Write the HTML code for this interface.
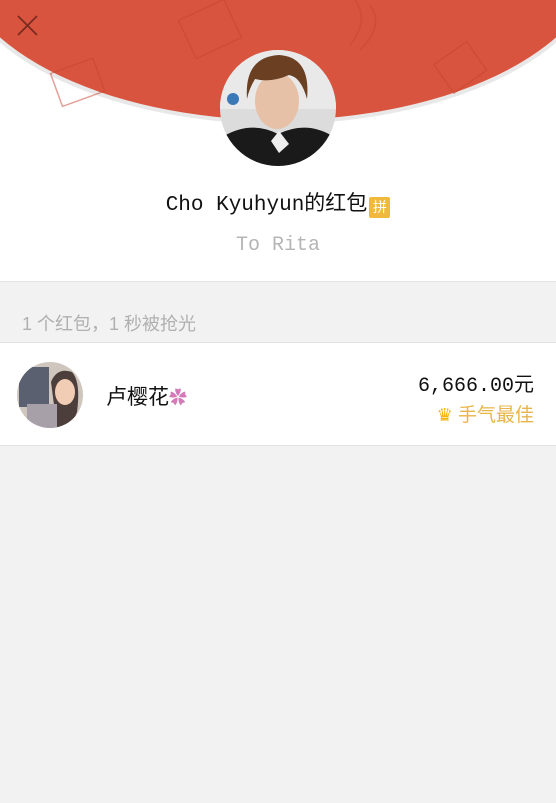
<!DOCTYPE html>
<html><head><meta charset="utf-8"><style>
body{margin:0;width:556px;height:803px;background:#f2f2f2;position:relative;overflow:hidden;font-family:"Liberation Sans","Noto Sans CJK SC",sans-serif}
.top{position:absolute;left:0;top:0;width:556px;height:281px;background:#fff;border-bottom:1px solid #e4e4e4}
.t{position:absolute;white-space:nowrap}
.m{font-family:"Liberation Mono","Noto Sans CJK SC",monospace}
</style></head><body>
<div class="top">
<svg width="556" height="140" style="position:absolute;left:0;top:0">
<ellipse cx="278" cy="-48" rx="326" ry="170" fill="#e8e8e8" transform="translate(0,2)"/>
<ellipse cx="278" cy="-50" rx="324" ry="170" fill="#d9543f"/>
<g stroke="#c4452f" stroke-width="1.5" fill="none" opacity=".5">
<rect x="185" y="8" width="50" height="42" transform="rotate(-25 210 29)"/>
<rect x="55" y="65" width="45" height="35" transform="rotate(-20 77 82)"/>
<rect x="440" y="50" width="40" height="35" transform="rotate(-35 460 67)"/>
<path d="M355 0 Q370 20 350 45 M370 5 Q385 25 360 50"/>
</g>
<path d="M18 16 L37 35 M37 16 L18 35" stroke="#7a2b20" stroke-width="1.8"/>
</svg>
<svg width="118" height="118" style="position:absolute;top:49px;left:219px">
<defs><clipPath id="c"><circle cx="59" cy="59" r="58"/></clipPath></defs>
<g clip-path="url(#c)">
<rect width="118" height="118" fill="#dcdcdc"/>
<rect x="0" y="0" width="118" height="60" fill="#e9e9ea"/>
<path d="M0 90 Q30 70 59 85 Q90 70 118 90 L118 118 L0 118Z" fill="#1a1a1a"/>
<ellipse cx="58" cy="52" rx="22" ry="28" fill="#e6c1a7"/>
<path d="M28 50 Q25 8 60 6 Q92 8 88 50 Q82 28 70 26 Q52 34 36 30 Q30 40 28 50Z" fill="#6b3f22"/>
<circle cx="14" cy="50" r="6" fill="#3a78b8"/>
<path d="M52 92 L60 82 L70 95 L60 104Z" fill="#eee"/>
</g></svg>
</div>
<div class="t m" style="left:0;width:556px;top:187px;text-align:center;font-size:21px;color:#111">Cho Kyuhyun的红包<span style="display:inline-block;width:21px;height:21px;background:#f0b83c;color:#fff;font-size:14px;line-height:21px;vertical-align:-2px;margin-left:2px;border-radius:2px;font-family:'Noto Sans CJK SC'">拼</span></div>
<div class="t m" style="left:0;width:556px;top:234px;text-align:center;font-size:20px;color:#b5b5b5">To Rita</div>
<div class="t" style="left:22px;top:310px;font-size:18px;color:#b0b0b0">1 个红包，1 秒被抢光</div>
<div style="position:absolute;left:0;top:342px;width:556px;height:102px;background:#fff;border-top:1px solid #e2e2e2;border-bottom:1px solid #e2e2e2"></div>
<svg width="66" height="66" style="position:absolute;left:17px;top:362px">
<defs><clipPath id="d"><circle cx="33" cy="33" r="33"/></clipPath></defs>
<g clip-path="url(#d)"><rect width="66" height="66" fill="#cfc6be"/>
<rect x="2" y="5" width="30" height="40" fill="#5a6070"/>
<path d="M34 20 Q40 5 55 10 Q64 20 60 50 L54 66 L40 66Z" fill="#2a1d1a" opacity=".8"/>
<ellipse cx="48" cy="30" rx="10" ry="13" fill="#f2cdb6"/>
<rect x="10" y="42" width="30" height="24" fill="#a8a0a8"/></g></svg>
<div class="t" style="left:106px;top:381px;font-size:21px;color:#111">卢樱花<span style="color:#d47ab8;font-size:18px">✿</span></div>
<div class="t m" style="right:22px;top:368px;font-size:20px;color:#111">6,666.00元</div>
<div class="t" style="right:22px;top:400px;font-size:19px;color:#e8b548"><span style="color:#f2b20f;font-size:18px">♛</span> 手气最佳</div>
</body></html>
